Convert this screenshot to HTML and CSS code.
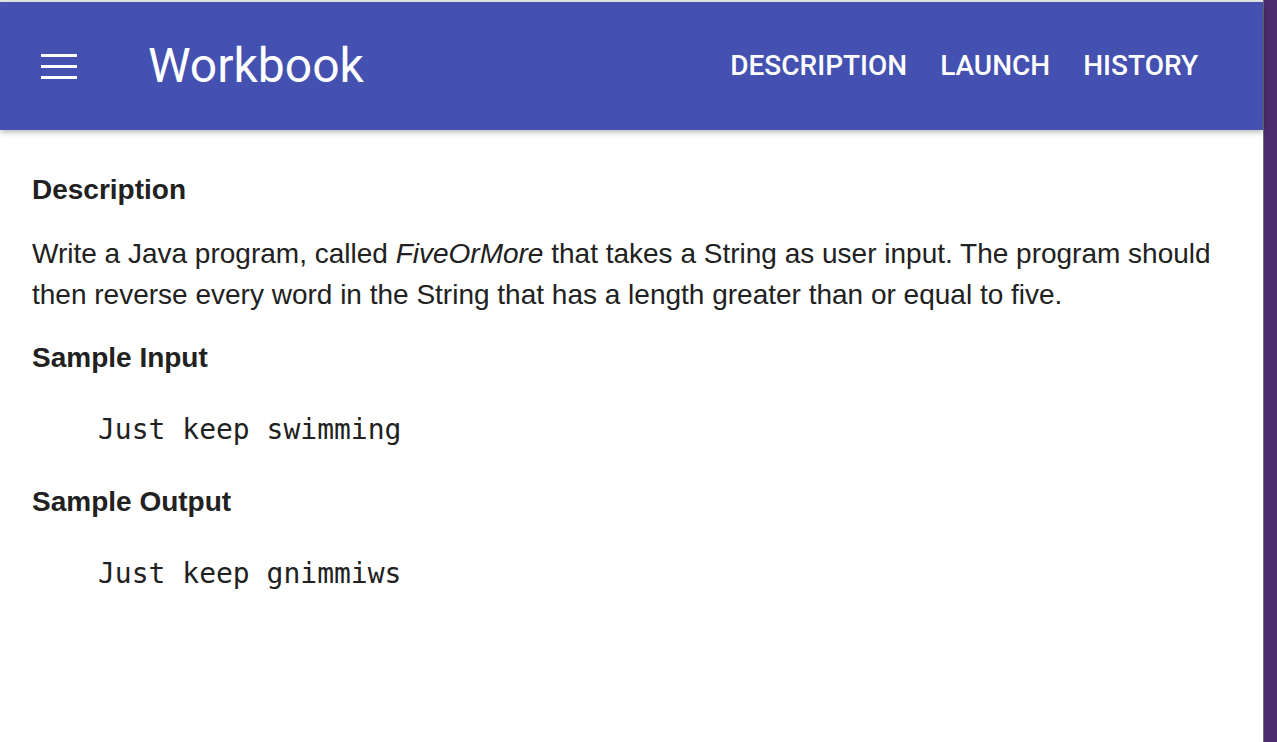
FILE: index.html
```html
<!DOCTYPE html>
<html>
<head>
<meta charset="utf-8">
<link rel="stylesheet" href="styles.css">
</head>
<body>
<div class="frame">
  <div class="app">
    <header class="bar">
      <button class="menu" aria-label="menu">
        <svg width="36" height="26" viewBox="0 0 36 26"><rect x="0" y="1" width="36" height="3" fill="#fff"/><rect x="0" y="12" width="36" height="3" fill="#fff"/><rect x="0" y="23" width="36" height="3" fill="#fff"/></svg>
      </button>
      <h1 class="title">Workbook</h1>
      <nav class="nav">
        <a class="nav-item">DESCRIPTION</a>
        <a class="nav-item">LAUNCH</a>
        <a class="nav-item">HISTORY</a>
      </nav>
    </header>
    <main class="content">
      <h2 class="heading">Description</h2>
      <p class="text">Write a Java program, called <em>FiveOrMore</em> that takes a String as user input. The program should then reverse every word in the String that has a length greater than or equal to five.</p>
      <h2 class="heading">Sample Input</h2>
      <pre class="code">Just keep swimming</pre>
      <h2 class="heading">Sample Output</h2>
      <pre class="code">Just keep gnimmiws</pre>
    </main>
  </div>
  <div class="edge"></div>
</div>
</body>
</html>
```
FILE: styles.css
```css
* { box-sizing: border-box; }
html, body { margin: 0; padding: 0; height: 100%; }
body { background: #fff; overflow: hidden; }
.frame { display: flex; height: 742px; }
.app { flex: 1; display: flex; flex-direction: column; background: #fff; border-top: 2px solid #ececec; }
.bar {
  height: 128px;
  background: #4451b0;
  display: flex;
  align-items: center;
  padding: 0 0 0 41px;
  box-shadow: 0 2px 6px rgba(0,0,0,0.3);
  position: relative;
  z-index: 1;
}
.menu { background: none; border: 0; padding: 0; margin: 0; width: 36px; height: 26px; display: block; }
.menu svg { display: block; }
.title {
  margin: 0 0 0 71px;
  font-family: Roboto, sans-serif;
  font-weight: 400;
  font-size: 48px;
  color: #fff;
  line-height: 1;
}
.nav { margin-left: auto; display: flex; gap: 33px; padding-right: 65px; padding-bottom: 2px; }
.nav-item {
  font-family: Roboto, sans-serif;
  font-weight: 500;
  font-size: 28px;
  color: #fff;
}
.content { padding: 39px 32px 0 32px; font-family: "Liberation Sans", Arial, sans-serif; color: #212121; }
.heading { font-size: 28px; font-weight: 700; margin: 0 0 22px 0; line-height: 42px; }
.text { font-size: 28px; line-height: 41px; margin: 0 0 22px 0; }
.code { font-family: "DejaVu Sans Mono", monospace; font-size: 28px; margin: 30px 0 30px 66px; line-height: 42px; }
.edge { width: 14px; background: #4b2c6e; border-left: 1px solid #707070; }
```
